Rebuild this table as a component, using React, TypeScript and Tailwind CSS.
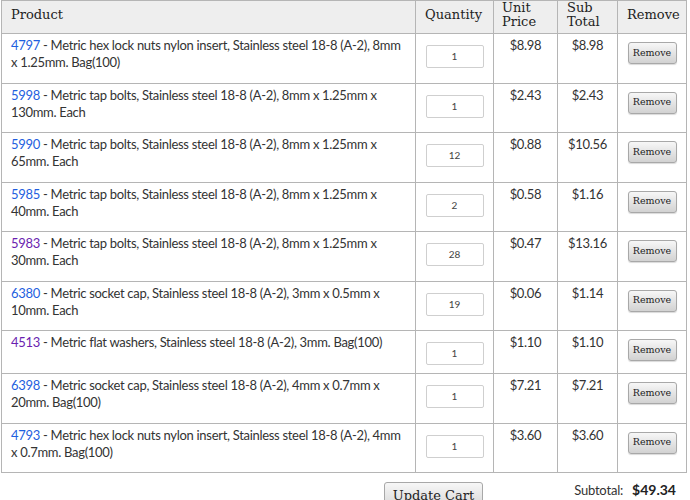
import React from "react";

type Row = {
  id: string;
  visited?: boolean;
  l1: string;
  l2?: string;
  qty: string;
  unit: string;
  sub: string;
};

const rows: Row[] = [
  { id: "4797", l1: "Metric hex lock nuts nylon insert, Stainless steel 18-8 (A-2), 8mm", l2: "x 1.25mm. Bag(100)", qty: "1", unit: "$8.98", sub: "$8.98" },
  { id: "5998", l1: "Metric tap bolts, Stainless steel 18-8 (A-2), 8mm x 1.25mm x", l2: "130mm. Each", qty: "1", unit: "$2.43", sub: "$2.43" },
  { id: "5990", l1: "Metric tap bolts, Stainless steel 18-8 (A-2), 8mm x 1.25mm x", l2: "65mm. Each", qty: "12", unit: "$0.88", sub: "$10.56" },
  { id: "5985", l1: "Metric tap bolts, Stainless steel 18-8 (A-2), 8mm x 1.25mm x", l2: "40mm. Each", qty: "2", unit: "$0.58", sub: "$1.16" },
  { id: "5983", visited: true, l1: "Metric tap bolts, Stainless steel 18-8 (A-2), 8mm x 1.25mm x", l2: "30mm. Each", qty: "28", unit: "$0.47", sub: "$13.16" },
  { id: "6380", l1: "Metric socket cap, Stainless steel 18-8 (A-2), 3mm x 0.5mm x", l2: "10mm. Each", qty: "19", unit: "$0.06", sub: "$1.14" },
  { id: "4513", visited: true, l1: "Metric flat washers, Stainless steel 18-8 (A-2), 3mm. Bag(100)", qty: "1", unit: "$1.10", sub: "$1.10" },
  { id: "6398", l1: "Metric socket cap, Stainless steel 18-8 (A-2), 4mm x 0.7mm x", l2: "20mm. Bag(100)", qty: "1", unit: "$7.21", sub: "$7.21" },
  { id: "4793", l1: "Metric hex lock nuts nylon insert, Stainless steel 18-8 (A-2), 4mm", l2: "x 0.7mm. Bag(100)", qty: "1", unit: "$3.60", sub: "$3.60" },
];

const slab = { fontFamily: '"DejaVu Serif", "Liberation Serif", serif' };
const sans = { fontFamily: 'Lato, "Open Sans", "Liberation Sans", sans-serif' };

export default function App() {
  return (
    <div className="w-[690px] h-[500px] overflow-hidden bg-white pl-px pt-0">
      <table className="border-collapse w-[685px] table-fixed text-[#333]" style={sans}>
        <colgroup>
          <col className="w-[414px]" />
          <col className="w-[78px]" />
          <col className="w-[64px]" />
          <col className="w-[60px]" />
          <col className="w-[69px]" />
        </colgroup>
        <thead>
          <tr className="bg-[#eeeeee] text-[#222] text-[13px] leading-[14px]" style={slab}>
            <th className="h-[33px] border border-[#b5b5b5] px-[9px] pt-0 pb-[4px] text-left font-normal align-middle">Product</th>
            <th className="h-[33px] border border-[#b5b5b5] px-[9px] pt-0 pb-[4px] text-left font-normal align-middle">Quantity</th>
            <th className="h-[33px] border border-[#b5b5b5] px-[8px] pt-0 pb-[4px] text-left font-normal align-middle">
              Unit
              <br />
              Price
            </th>
            <th className="h-[33px] border border-[#b5b5b5] px-[9px] pt-0 pb-[4px] text-left font-normal align-middle">
              Sub
              <br />
              Total
            </th>
            <th className="h-[33px] border border-[#b5b5b5] px-[9px] pt-0 pb-[4px] text-left font-normal align-middle">Remove</th>
          </tr>
        </thead>
        <tbody>
          {rows.map((r) => {
            const h = r.l2 ? "h-[49.5px]" : "h-[43px]";
            return (
              <tr key={r.id}>
                <td className={`${h} border border-[#b5b5b5] px-[9px] pt-[3px] align-top text-[13px] leading-[17px] tracking-[-0.3px] whitespace-nowrap`}>
                  <span className={r.visited ? "text-[#6b1fb0]" : "text-[#1f5fe0]"}>{r.id}</span>
                  {" - "}
                  {r.l1}
                  {r.l2 && (
                    <>
                      <br />
                      {r.l2}
                    </>
                  )}
                </td>
                <td className={`${h} border border-[#b5b5b5] align-top pt-[11px]`}>
                  <div className="flex justify-center">
                    <div className="w-[58px] h-[23px] border border-[#cfcfcf] rounded-[2px] bg-white flex items-center justify-center text-[10px] text-[#444]">
                      {r.qty}
                    </div>
                  </div>
                </td>
                <td className={`${h} border border-[#b5b5b5] align-top pt-[3px] text-center text-[13px] leading-[17px] tracking-[-0.3px]`}>{r.unit}</td>
                <td className={`${h} border border-[#b5b5b5] align-top pt-[3px] text-center text-[13px] leading-[17px] tracking-[-0.3px]`}>{r.sub}</td>
                <td className={`${h} border border-[#b5b5b5] align-top pt-[8px]`}>
                  <div className="flex justify-center">
                    <button
                      className="w-[49px] h-[22px] rounded-[3px] border border-[#a8a8a8] bg-gradient-to-b from-[#f7f7f7] to-[#d2d2d2] text-[9.5px] text-[#222] shadow-[0_1px_1px_rgba(0,0,0,0.15)]"
                      style={slab}
                    >
                      Remove
                    </button>
                  </div>
                </td>
              </tr>
            );
          })}
        </tbody>
      </table>
      <div className="flex w-[685px] mt-[9px]">
        <div className="w-[383px]" />
        <button
          className="w-[99px] h-[28px] rounded-[3px] border border-[#a8a8a8] bg-gradient-to-b from-[#f7f7f7] to-[#d6d6d6] text-[13px] text-[#222] leading-[24px] text-center"
          style={slab}
        >
          Update Cart
        </button>
        <div className="flex-1 flex justify-end items-start pr-[10px] pt-[0px] gap-[9px]" style={sans}>
          <span className="text-[13px] text-[#333] leading-[16px] tracking-[-0.2px]">Subtotal:</span>
          <span className="text-[14px] font-bold text-[#222] leading-[16px]">$49.34</span>
        </div>
      </div>
    </div>
  );
}
